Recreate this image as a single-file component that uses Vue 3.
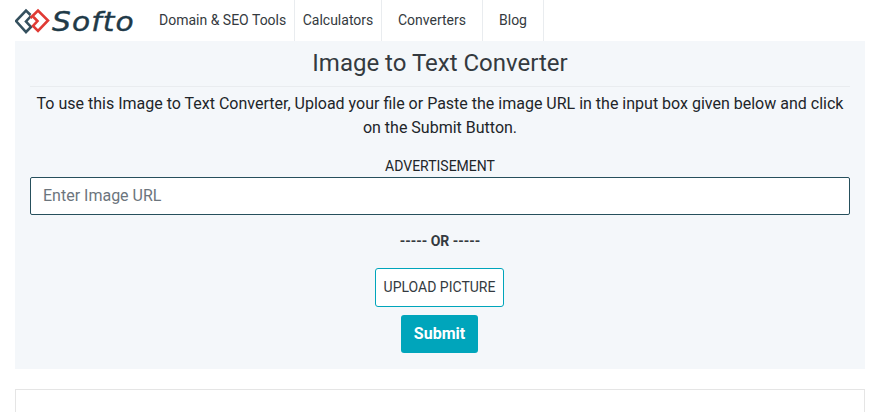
<script setup>
const navItems = [
  { label: 'Domain & SEO Tools', cls: 'first' },
  { label: 'Calculators', cls: 'calc' },
  { label: 'Converters', cls: 'wide' },
  { label: 'Blog', cls: 'wide' }
]
</script>

<template>
  <div class="page">
    <header class="header">
      <div class="logo">
        <svg class="mark" width="36" height="26" viewBox="15 8 36 26" fill="none" stroke-width="2.6">
          <path d="M30.5 15 L26 10.5 L16 21 L26 32 L31 27 L26 21.5 L31 16" stroke="#35505e" />
          <path d="M30.5 18 L38 10.5 L48 20.5 L38 31 L33 26 L37.5 21 L33.5 17" stroke="#e03a34" />
        </svg>
        <span class="word">Softo</span>
      </div>
      <nav class="nav">
        <a v-for="item in navItems" :key="item.label" class="nav-item" :class="item.cls">{{ item.label }}</a>
      </nav>
    </header>

    <main class="panel">
      <h1 class="title">Image to Text Converter</h1>
      <p class="intro">To use this Image to Text Converter, Upload your file or Paste the image URL in the input box given below and click on the Submit Button.</p>
      <div class="ad">ADVERTISEMENT</div>
      <input class="url" type="text" placeholder="Enter Image URL" />
      <div class="or">----- OR -----</div>
      <button class="upload" type="button">UPLOAD PICTURE</button>
      <button class="submit" type="button">Submit</button>
    </main>

    <section class="next"></section>
  </div>
</template>

<style>
html, body { margin: 0; background: #fff; overflow: hidden; }
</style>

<style scoped>
.page {
  width: 877px;
  height: 412px;
  overflow: hidden;
  font-family: Roboto, "Liberation Sans", sans-serif;
  color: #343a40;
  box-sizing: border-box;
  padding: 0 12px 0 15px;
}
.header { display: flex; height: 41px; }
.logo { display: flex; align-items: center; width: 135px; flex: none; }
.mark { flex: none; margin: 1px 1px 0 0; }
.word {
  display: inline-block;
  font-family: "DejaVu Sans", sans-serif;
  font-style: italic;
  font-size: 26px;
  line-height: 41px;
  letter-spacing: 1px;
  color: #1f3a48;
  -webkit-text-stroke: 0.4px #1f3a48;
  transform: scaleX(1.14);
  transform-origin: left center;
  margin-top: 3px;
}
.nav { display: flex; }
.nav-item {
  font-size: 14px;
  line-height: 41px;
  height: 41px;
  box-sizing: border-box;
  border-right: 1px solid #e9ecef;
  text-align: center;
  color: #343a40;
}
.first { width: 145px; padding-left: 9px; text-align: left; }
.calc { width: 87px; }
.wide:nth-child(3) { width: 101px; }
.wide:nth-child(4) { width: 61px; }
.panel {
  width: 850px;
  height: 328px;
  box-sizing: border-box;
  background: #f4f7fa;
  padding: 0 15px;
  display: flex;
  flex-direction: column;
  align-items: center;
}
.title {
  width: 100%;
  margin: 0;
  height: 46px;
  box-sizing: border-box;
  border-bottom: 1px solid #e9ecef;
  font-size: 24px;
  font-weight: 400;
  line-height: 45px;
  text-align: center;
}
.intro {
  margin: 5px 0 0;
  font-size: 16px;
  line-height: 24px;
  text-align: center;
  color: #212529;
}
.ad {
  margin-top: 16px;
  font-size: 14px;
  line-height: 21px;
  color: #212529;
}
.url {
  display: block;
  width: 100%;
  height: 38px;
  box-sizing: border-box;
  margin-top: 0;
  padding: 0 12px 2px;
  border: 1px solid #264f5c;
  border-radius: 2px;
  background: #fff;
  outline: none;
  font-family: inherit;
  font-size: 16px;
}
.url::placeholder { color: #6c757d; opacity: 1; }
.or {
  margin-top: 16px;
  font-size: 14px;
  font-weight: 700;
  line-height: 21px;
}
.upload {
  margin: 16px 1px 0 0;
  width: 129px;
  height: 39px;
  box-sizing: border-box;
  padding: 0 0 2px;
  border: 1px solid #00a5bb;
  border-radius: 3px;
  background: #fff;
  font-family: inherit;
  font-size: 14px;
  color: #343a40;
}
.submit {
  margin: 8px 1px 0 0;
  width: 77px;
  height: 38px;
  padding: 0 0 2px;
  border: 0;
  border-radius: 3px;
  background: #00a5bb;
  font-family: inherit;
  font-size: 16px;
  font-weight: 700;
  color: #fff;
}
.next {
  width: 850px;
  height: 60px;
  margin-top: 20px;
  box-sizing: border-box;
  border: 1px solid #e5e5e5;
}
</style>
